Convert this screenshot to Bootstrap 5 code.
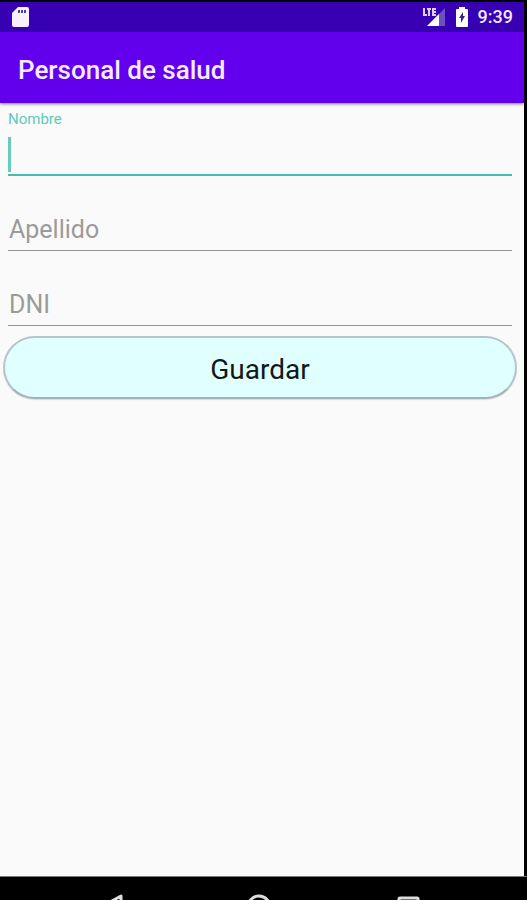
<!DOCTYPE html>
<html lang="es">
<head>
<meta charset="utf-8">
<meta name="viewport" content="width=device-width, initial-scale=1">
<title>Personal de salud</title>
<link href="https://cdn.jsdelivr.net/npm/bootstrap@5.3.0/dist/css/bootstrap.min.css" rel="stylesheet">
<style>
body { font-family: Roboto, "Noto Sans", sans-serif; background: #000; }
.screen { border-right: 3px solid #000; border-top: 2px solid #000; background: #fafafa; }
.status-bar { background: #3700b3; height: 30px; padding: 0 11px 0 12px; color: #f1e8ff; }
.clock { font-size: 18px; font-weight: 500; line-height: 30px; }
.app-bar { background: #6200ee; height: 71px; padding: 4px 18px 0; box-shadow: 0 1px 3px rgba(0,0,0,.5); }
.app-title { font-size: 26px; font-weight: 500; line-height: 32px; color: #f6eaff; }
.fields { padding: 6px 12px 0 8px; }
.hint { font-size: 15px; line-height: 20px; color: #5ccbb9; }
.line-input { border: 0; border-bottom: 1px solid #929292; border-radius: 0; background: transparent; padding: 0 1px; font-size: 25px; line-height: 40px; height: 44px; color: #222; }
.line-input:focus { background: transparent; box-shadow: none; border-color: #3fbfac; }
.line-active { border-bottom: 2px solid #3fbfac; height: 47px; caret-color: transparent; }
.caret { width: 3px; height: 35px; left: 0; top: 8px; background: #67ccbd; }
.spaced { margin-top: 31px; }
.over-label { left: 1px; top: 3px; font-size: 25px; line-height: 40px; color: #9b9b9b; pointer-events: none; }
.line-input:not(:placeholder-shown) + .over-label, .line-input:focus + .over-label { top: -20px; font-size: 15px; line-height: 20px; }
.save-btn, .save-btn:hover { background: #e0ffff; border: 2px solid #b4c6ca; border-bottom-color: #a3b2b6; border-radius: 32px; height: 63px; padding: 4px 0 0; font-size: 28px; line-height: 32px; color: #101818; box-shadow: 0 1px 1px rgba(0,0,0,.12); }
.actions { padding: 10px 7px 0 3px; }
.nav-keys { height: 24px; background: #000; border-top: 1px solid #777; }
.nav-keys button { width: 28px; height: 28px; padding: 0; margin-top: 16px; border: 0; background: none; }
.nav-keys svg { display: block; }
.nav-keys div { padding: 0 105px 0 96px; }
</style>
<script src="https://cdn.jsdelivr.net/npm/bootstrap@5.3.0/dist/js/bootstrap.bundle.min.js"></script>
</head>
<body class="d-flex flex-column vh-100 overflow-hidden">
<div class="screen flex-grow-1 d-flex flex-column">
  <div class="status-bar d-flex align-items-center justify-content-between">
    <svg width="17" height="20" viewBox="0 0 17 20" aria-label="Tarjeta SD"><path d="M6 0h9q2 0 2 2v16q0 2-2 2H2q-2 0-2-2V6z" fill="#f8f0ff"/><path d="M6 3h2v3H6zM9 3h2v3H9zM12 3h2v3h-2z" fill="#54418e"/></svg>
    <div class="d-flex align-items-center">
      <svg width="23" height="20" viewBox="0 0 23 20" aria-label="LTE"><path d="M22 1v18H4z" fill="#6c50c0"/><path d="M16 7v12H4z" fill="#fff"/><path d="M1 1v7h3M4 2h4M6 2v7M13 2h-3v6h3M10 5h3" fill="none" stroke="#dccfff" stroke-width="2"/></svg>
      <svg class="ms-2 me-2" width="16" height="20" viewBox="0 0 16 20" aria-label="Batería cargando"><path d="M5 0h6v2h2q1 0 1 1v16q0 1-1 1H3q-1 0-1-1V3q0-1 1-1h2z" fill="#fff"/><path d="M9 5v4h2l-4 7v-5H5z" fill="#3b2387"/></svg>
      <span class="clock">9:39</span>
    </div>
  </div>
  <header class="app-bar d-flex align-items-center position-relative">
    <h1 class="app-title m-0">Personal de salud</h1>
  </header>
  <form>
    <div class="fields">
      <label class="hint d-block" for="nombre">Nombre</label>
      <div class="position-relative">
        <input class="form-control line-input line-active" id="nombre" type="text">
        <span class="caret position-absolute"></span>
      </div>
      <div class="position-relative spaced">
        <input class="form-control line-input" id="apellido" type="text" placeholder=" ">
        <label class="over-label position-absolute" for="apellido">Apellido</label>
      </div>
      <div class="position-relative spaced">
        <input class="form-control line-input" id="dni" type="text" placeholder=" ">
        <label class="over-label position-absolute" for="dni">DNI</label>
      </div>
    </div>
    <div class="actions">
      <button class="btn save-btn w-100" type="button">Guardar</button>
    </div>
  </form>
</div>
<nav class="nav-keys flex-shrink-0 overflow-hidden" aria-label="Sistema">
  <div class="d-flex justify-content-between">
    <button type="button" aria-label="Atrás"><svg width="28" height="28" viewBox="0 0 28 28" fill="none" stroke="#ddd" stroke-width="3" stroke-linejoin="round"><path d="M25 3v22L5 14z"/></svg></button>
    <button type="button" aria-label="Inicio"><svg width="28" height="28" viewBox="0 0 28 28" fill="none" stroke="#ddd" stroke-width="3"><circle cx="14" cy="14" r="11"/></svg></button>
    <button type="button" aria-label="Recientes"><svg width="28" height="28" viewBox="0 0 28 28" fill="none" stroke="#ddd" stroke-width="3"><rect x="5" y="5" width="19" height="19" rx="1"/></svg></button>
  </div>
</nav>
</body>
</html>
